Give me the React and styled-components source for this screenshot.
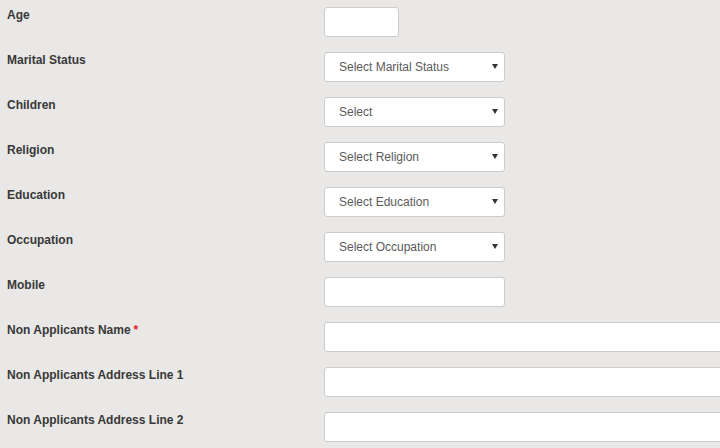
import React from "react";
import styled, { createGlobalStyle } from "styled-components";

const GlobalStyle = createGlobalStyle`
  html, body {
    margin: 0;
    padding: 0;
    background: #e9e8e6;
    overflow: hidden;
  }
  body {
    font-family: "Liberation Sans", Arial, sans-serif;
  }
`;

const Form = styled.form`
  padding: 7px 0 0 7px;
  width: 720px;
  box-sizing: border-box;
`;

const Row = styled.div`
  display: flex;
  align-items: flex-start;
  height: 45px;
`;

const Label = styled.label`
  width: 317px;
  flex: none;
  padding-top: 1px;
  font-size: 12px;
  font-weight: bold;
  color: #383838;
  line-height: 15px;
`;

const Required = styled.span`
  color: #e02020;
  margin-left: 3px;
`;

const TextInput = styled.input`
  box-sizing: border-box;
  flex: none;
  width: ${p => (p.size === "small" ? "75px" : p.size === "wide" ? "420px" : "181px")};
  height: 30px;
  margin: 0;
  padding: 0 10px;
  background: #fff;
  border: 1px solid #cccccc;
  border-radius: 3px;
  font-family: inherit;
  font-size: 12px;
  color: #555;
  outline: none;
`;

const SelectWrap = styled.div`
  position: relative;
  flex: none;
  width: 181px;
  height: 30px;
`;

const Select = styled.select`
  box-sizing: border-box;
  width: 100%;
  height: 30px;
  margin: 0;
  padding: 0 20px 0 14px;
  appearance: none;
  background: #fff;
  border: 1px solid #cccccc;
  border-radius: 3px;
  font-family: "Liberation Sans", Arial, sans-serif;
  font-size: 12px;
  color: #5a5a5a;
  outline: none;
`;

const Caret = styled.span`
  position: absolute;
  right: 7px;
  top: 12px;
  width: 0;
  height: 0;
  border-left: 3px solid transparent;
  border-right: 3px solid transparent;
  border-top: 5px solid #333;
  pointer-events: none;
`;

const fields = [
  { label: "Age", type: "input", size: "small" },
  { label: "Marital Status", type: "select", placeholder: "Select Marital Status" },
  { label: "Children", type: "select", placeholder: "Select" },
  { label: "Religion", type: "select", placeholder: "Select Religion" },
  { label: "Education", type: "select", placeholder: "Select Education" },
  { label: "Occupation", type: "select", placeholder: "Select Occupation" },
  { label: "Mobile", type: "input", size: "medium" },
  { label: "Non Applicants Name", type: "input", size: "wide", required: true },
  { label: "Non Applicants Address Line 1", type: "input", size: "wide" },
  { label: "Non Applicants Address Line 2", type: "input", size: "wide" },
];

export default function App() {
  return (
    <>
      <GlobalStyle />
      <Form>
        {fields.map(f => (
          <Row key={f.label}>
            <Label>
              {f.label}
              {f.required && <Required>*</Required>}
            </Label>
            {f.type === "select" ? (
              <SelectWrap>
                <Select defaultValue="">
                  <option value="">{f.placeholder}</option>
                </Select>
                <Caret />
              </SelectWrap>
            ) : (
              <TextInput type="text" size={f.size} />
            )}
          </Row>
        ))}
      </Form>
    </>
  );
}
